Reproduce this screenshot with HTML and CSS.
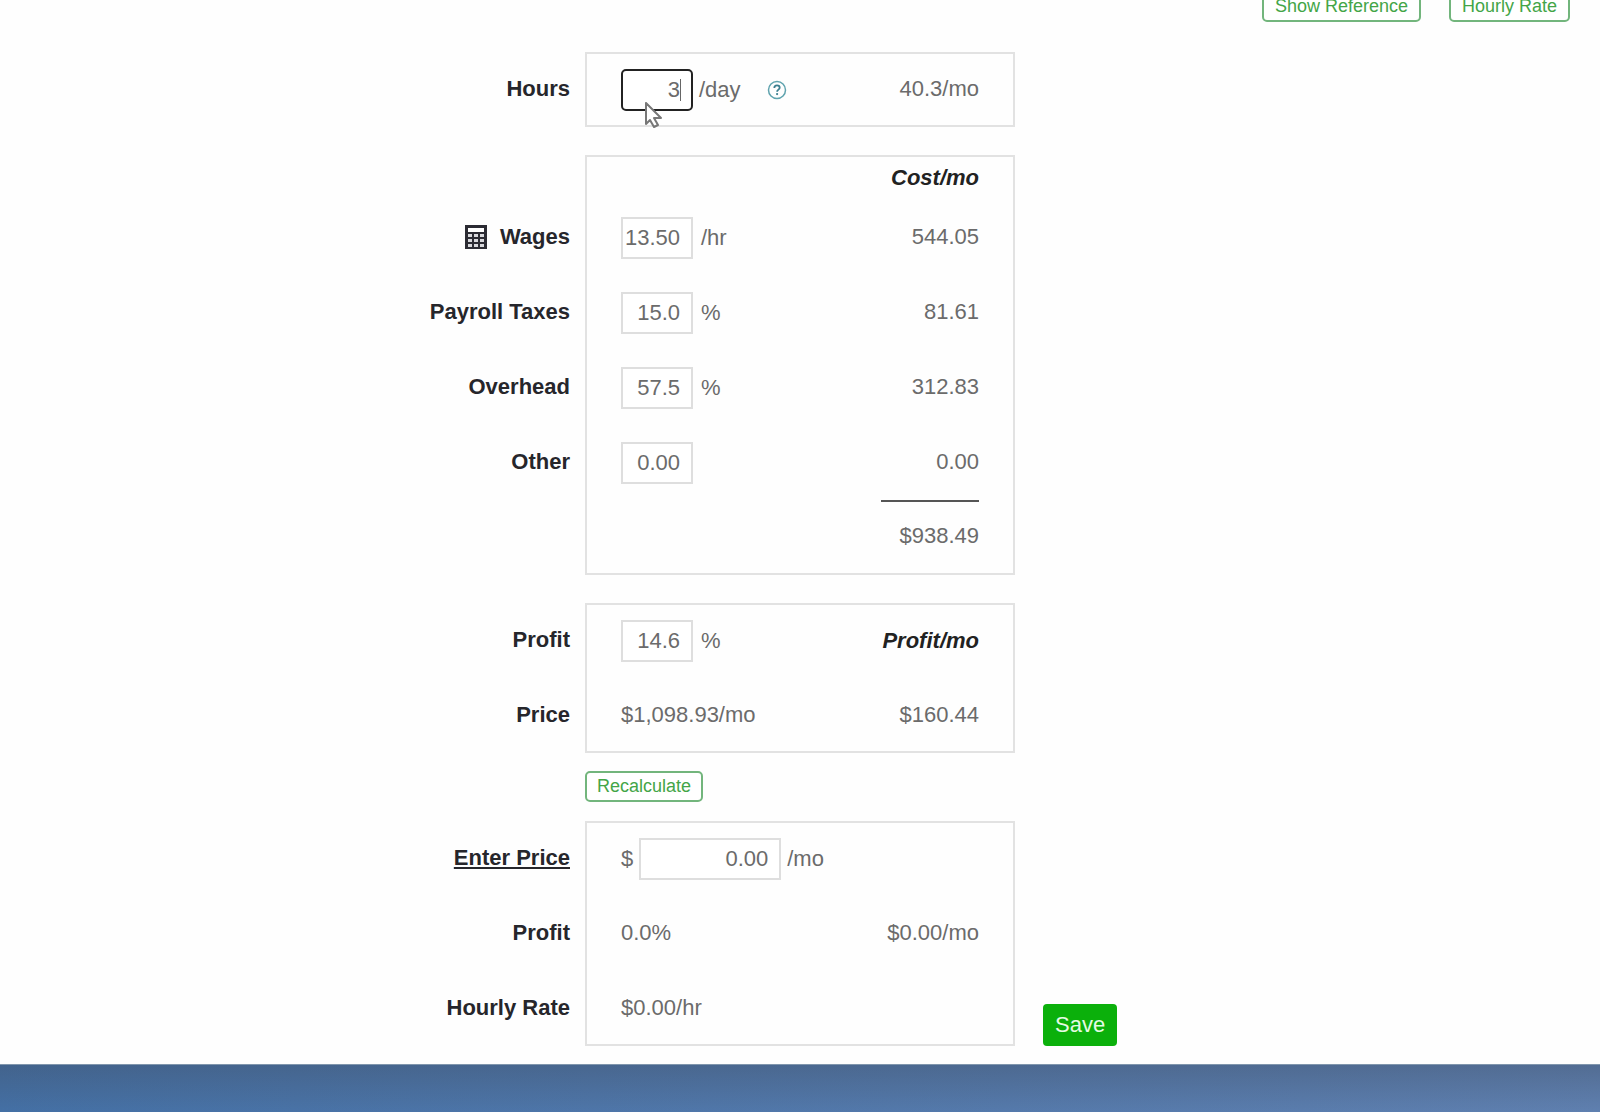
FILE: index.html
```html
<!DOCTYPE html>
<html lang="en">
<head>
    <meta charset="UTF-8">
    <meta name="viewport" content="width=device-width, initial-scale=1.0">
    <title>Price Calculator</title>
    <link rel="stylesheet" href="styles.css">
</head>
<body>
    <header class="toolbar">
        <button type="button" class="btn-outline">Show Reference</button>
        <button type="button" class="btn-outline">Hourly Rate</button>
    </header>

    <form class="calculator">
        <section class="group">
            <div class="labels">
                <div class="row"><label for="hours">Hours</label></div>
            </div>
            <div class="panel">
                <div class="row">
                    <span class="field">
                        <input type="text" id="hours" class="active" value="3">
                        <span class="caret"></span>
                        <svg class="pointer" width="18" height="27" viewBox="0 0 18 27">
                            <path d="M1 1v21l4-4 4 7 4-2-4-7h7z" fill="#fff" stroke="#777" stroke-width="2" stroke-linejoin="round"/>
                        </svg>
                    </span>
                    <span class="unit">/day</span>
                    <svg class="help" width="20" height="20" viewBox="0 0 20 20" fill="none">
                        <circle cx="10" cy="10" r="8.5" stroke="#5fa3ae" stroke-width="1.5"/>
                        <path d="M7.3 8c0-1.7 1.1-2.6 2.7-2.6s2.7 1 2.7 2.4c0 1.8-2.6 1.9-2.6 3.9" stroke="#3b7f90" stroke-width="1.8"/>
                        <circle cx="10.1" cy="14.1" r="1.1" fill="#3b7f90"/>
                    </svg>
                    <span class="amount">40.3/mo</span>
                </div>
            </div>
        </section>

        <section class="group">
            <div class="labels">
                <div class="row heading"></div>
                <div class="row">
                    <svg class="calc-icon" width="22" height="24" viewBox="0 0 22 24">
                        <path d="M0 0h22v24H0z" fill="#2b2b33"/>
                        <path d="M3 3h16v4H3z" fill="#fff"/>
                        <g fill="#d8d8dc">
                            <path d="M3 9h4v3H3zM9 9h4v3H9zM15 9h4v3h-4z"/>
                            <path d="M3 14h4v3H3zM9 14h4v3H9zM15 14h4v3h-4z"/>
                            <path d="M3 19h4v3H3zM9 19h4v3H9zM15 19h4v3h-4z"/>
                        </g>
                    </svg>
                    <label for="wages">Wages</label>
                </div>
                <div class="row"><label for="taxes">Payroll Taxes</label></div>
                <div class="row"><label for="overhead">Overhead</label></div>
                <div class="row"><label for="other">Other</label></div>
            </div>
            <div class="panel">
                <div class="row heading"><em class="amount">Cost/mo</em></div>
                <div class="row">
                    <input type="text" id="wages" value="13.50">
                    <span class="unit">/hr</span>
                    <span class="amount">544.05</span>
                </div>
                <div class="row">
                    <input type="text" id="taxes" value="15.0">
                    <span class="unit">%</span>
                    <span class="amount">81.61</span>
                </div>
                <div class="row">
                    <input type="text" id="overhead" value="57.5">
                    <span class="unit">%</span>
                    <span class="amount">312.83</span>
                </div>
                <div class="row">
                    <input type="text" id="other" value="0.00">
                    <span class="amount">0.00</span>
                </div>
                <div class="row"><span class="amount total">$938.49</span></div>
            </div>
        </section>

        <section class="group">
            <div class="labels">
                <div class="row"><label for="profit">Profit</label></div>
                <div class="row">Price</div>
            </div>
            <div class="panel">
                <div class="row">
                    <input type="text" id="profit" value="14.6">
                    <span class="unit">%</span>
                    <em class="amount">Profit/mo</em>
                </div>
                <div class="row">
                    <span class="value">$1,098.93/mo</span>
                    <span class="amount">$160.44</span>
                </div>
            </div>
        </section>

        <div class="group recalculate">
            <button type="button" class="btn-outline">Recalculate</button>
        </div>

        <section class="group">
            <div class="labels">
                <div class="row"><label for="price" class="underlined">Enter Price</label></div>
                <div class="row">Profit</div>
                <div class="row">Hourly Rate</div>
            </div>
            <div class="panel">
                <div class="row">
                    <span>$</span>
                    <input type="text" id="price" class="wide" value="0.00">
                    <span class="unit">/mo</span>
                </div>
                <div class="row">
                    <span class="value">0.0%</span>
                    <span class="amount">$0.00/mo</span>
                </div>
                <div class="row"><span class="value">$0.00/hr</span></div>
            </div>
            <button type="submit" class="btn-save">Save</button>
        </section>
    </form>

    <footer class="footer"></footer>
</body>
</html>
```
FILE: styles.css
```css
* {
    box-sizing: border-box;
}

body {
    display: flex;
    flex-direction: column;
    min-height: 100vh;
    margin: 0;
    background: #fefefe;
    color: #6b6b6b;
    font-family: "Liberation Sans", Arial, sans-serif;
    font-size: 22px;
    line-height: 26px;
}

button,
input {
    font-family: inherit;
}

.toolbar {
    display: flex;
    justify-content: flex-end;
    gap: 28px;
    margin-top: -9px;
    padding-right: 30px;
}

.calculator {
    padding: 30px 0 18px;
}

.group {
    display: grid;
    grid-template-columns: 1fr 430px 1fr;
    margin-bottom: 28px;
}

.group:last-child {
    margin-bottom: 0;
}

.labels {
    padding-right: 15px;
    color: #26262b;
    font-weight: bold;
}

.labels .row {
    justify-content: flex-end;
    padding-bottom: 2px;
}

.underlined {
    text-decoration: underline;
    text-decoration-thickness: 2px;
    text-underline-offset: 2px;
}

.calc-icon {
    margin-right: 13px;
}

.panel {
    padding: 0 36px;
    box-shadow: inset 0 0 0 2px #e2e2e2;
}

.row {
    display: flex;
    align-items: center;
    height: 75px;
}

.row.heading {
    height: 45px;
}

.value,
.amount {
    padding-bottom: 2px;
}

.amount {
    margin-left: auto;
}

em.amount {
    padding-bottom: 0;
    color: #222;
    font-weight: bold;
}

.total {
    display: flex;
    align-items: center;
    justify-content: flex-end;
    align-self: stretch;
    width: 98px;
    padding-bottom: 5px;
    border-top: 2px solid #555;
}

.unit {
    margin-left: 8px;
}

input {
    width: 72px;
    height: 42px;
    padding: 0 11px 0 0;
    border: 2px solid #dedede;
    background: #fff;
    color: #6b6b6b;
    font-size: 22px;
    text-align: right;
}

input.wide {
    width: 142px;
    margin-left: 6px;
}

input.active {
    border: 2px solid #222;
    border-radius: 5px;
    outline: none;
}

.wide + .unit,
.field + .unit {
    margin-left: 6px;
}

.field {
    position: relative;
    display: flex;
}

.caret {
    position: absolute;
    top: 10px;
    right: 12px;
    width: 1px;
    height: 22px;
    background: #666;
}

.pointer {
    position: absolute;
    top: 33px;
    left: 24px;
}

.help {
    margin-left: 26px;
}

.btn-outline {
    height: 31px;
    padding: 0 10px;
    border: 2px solid #72b57c;
    border-radius: 5px;
    background: #fff;
    color: #43a547;
    font-size: 18px;
}

.toolbar .btn-outline {
    padding: 0 11px;
}

.recalculate {
    margin: -10px 0 19px;
}

.recalculate .btn-outline {
    grid-column: 2;
    justify-self: start;
}

.btn-save {
    align-self: end;
    justify-self: start;
    height: 42px;
    margin-left: 28px;
    padding: 0 12px;
    border: none;
    border-radius: 4px;
    background: #0bb00b;
    color: #e4fbe4;
    font-size: 22px;
}

.footer {
    flex: 1;
    min-height: 48px;
    border-top: 1px solid #8096ad;
    background: linear-gradient(rgba(64, 80, 104, 0.4), rgba(64, 80, 104, 0)),
        linear-gradient(to right, #4470a5, #5f80b0);
}
```
